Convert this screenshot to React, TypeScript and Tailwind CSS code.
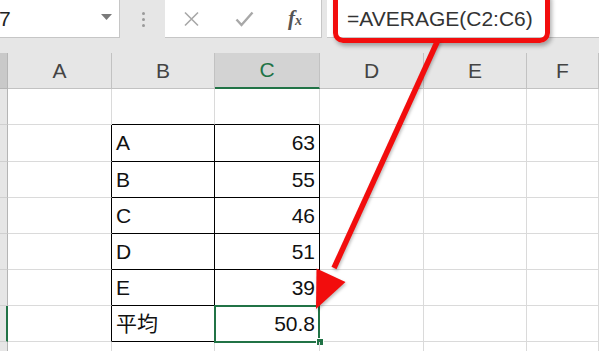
import React from 'react'

const font = { fontFamily: '"Liberation Sans", "Noto Sans CJK JP", sans-serif' }

const colWidths = ['w-[104px]', 'w-[103px]', 'w-[105px]', 'w-[104px]', 'w-[103px]', 'flex-1']
const letters = ['A', 'B', 'C', 'D', 'E', 'F']

const rows = [
  { h: 'h-[36px]', b: '', c: '' },
  { h: 'h-[37px]', b: 'A', c: '63' },
  { h: 'h-[36px]', b: 'B', c: '55' },
  { h: 'h-[36px]', b: 'C', c: '46' },
  { h: 'h-[36px]', b: 'D', c: '51' },
  { h: 'h-[36px]', b: 'E', c: '39' },
  { h: 'h-[36px]', b: '平均', c: '50.8' },
  { h: 'h-[36px]', b: '', c: '' },
]

function FormulaBar() {
  return (
    <div className="bg-[#e6e6e6]">
      <div className="flex h-[38px]">
        {/* name box */}
        <div className="relative flex w-[120px] items-center overflow-hidden border-r border-b border-[#c6c6c6] bg-white">
          <span className="ml-[-1px] text-[21px] leading-none text-[#222]">7</span>
          <svg className="absolute left-[101px] top-[14px]" width="11" height="6" viewBox="0 0 11 6">
            <path d="M0 0 L11 0 L5.5 6 Z" fill="#7a7a7a" />
          </svg>
        </div>
        <div className="flex w-[45px] flex-col items-center justify-center gap-[3px] pl-[1px]">
          <span className="h-[3px] w-[3px] rounded-full bg-[#9a9a9a]" />
          <span className="h-[3px] w-[3px] rounded-full bg-[#9a9a9a]" />
          <span className="h-[3px] w-[3px] rounded-full bg-[#9a9a9a]" />
        </div>
        {/* cancel / enter / fx */}
        <div className="flex w-[157px] items-center border-r border-b border-[#c6c6c6] bg-white">
          <svg className="ml-[18px]" width="17" height="16" viewBox="0 0 17 16">
            <path d="M2 1.5 L15 14.5 M15 1.5 L2 14.5" stroke="#a8a8a8" strokeWidth="1.6" />
          </svg>
          <svg className="ml-[35px]" width="19" height="16" viewBox="0 0 19 16">
            <path d="M1.5 8.5 L6.5 14 L17.5 1.5" stroke="#a8a8a8" strokeWidth="2.4" fill="none" />
          </svg>
          <span
            className="ml-[34px] text-[21px] font-bold italic leading-none text-[#555]"
            style={{ fontFamily: '"Liberation Serif", serif' }}
          >
            f<span className="text-[14px]">x</span>
          </span>
        </div>
        <div className="w-[5px]" />
        <div className="flex flex-1 items-center border-b border-[#c6c6c6] bg-white pl-[20px]">
          <span className="text-[21px] leading-none text-[#333]">=AVERAGE(C2:C6)</span>
        </div>
      </div>
      <div className="h-[15px]" />
    </div>
  )
}

function HeaderRow() {
  return (
    <div className="flex h-[36px] bg-[#e6e6e6]">
      <div className="w-[8px] border-r border-b border-[#b5b5b5] bg-[#c9c9c9]" />
      {letters.map((l, i) => (
        <div
          key={l}
          className={`${colWidths[i]} flex items-center justify-center border-r text-[21px] ${
            l === 'C'
              ? 'border-b-2 border-r-[#c2c2c2] border-b-[#217346] bg-[#d3d3d3] text-[#217346]'
              : 'border-b border-[#c2c2c2] text-[#444]'
          }`}
        >
          {l}
        </div>
      ))}
    </div>
  )
}

export default function App() {
  return (
    <div className="relative h-[351px] w-[599px] overflow-hidden bg-white" style={font}>
      <FormulaBar />
      <HeaderRow />

      {rows.map((r, ri) => {
        const inTable = ri >= 1 && ri <= 6
        const active = ri === 6
        return (
          <div key={ri} className={`flex ${r.h}`}>
            <div
              className={`w-[8px] border-b border-[#d0d0d0] bg-[#e6e6e6] ${
                active ? 'border-r-2 border-r-[#217346]' : 'border-r border-r-[#b5b5b5]'
              }`}
            />
            {/* A */}
            <div
              className={`${colWidths[0]} border-r border-b border-b-[#dadada] ${
                inTable ? 'border-r-black' : 'border-r-[#dadada]'
              }`}
            />
            {/* B */}
            <div
              className={`${colWidths[1]} flex items-center border-r border-b pl-[4px] text-[21px] text-[#111] ${
                ri === 0 || inTable ? 'border-b-black' : 'border-b-[#dadada]'
              } ${inTable ? 'border-r-black' : 'border-r-[#dadada]'}`}
            >
              {r.b}
            </div>
            {/* C */}
            <div
              className={`${colWidths[2]} relative flex items-center justify-end border-r border-b pr-[4px] text-[21px] text-[#111] ${
                ri === 0 || inTable ? 'border-b-black' : 'border-b-[#dadada]'
              } ${inTable ? 'border-r-black' : 'border-r-[#dadada]'}`}
            >
              {r.c}
              {active && (
                <>
                  <div className="absolute left-[-1px] top-[-1px] h-[38px] w-[106px] border-2 border-[#217346]" />
                  <div className="absolute right-[-5px] bottom-[-5px] h-[8px] w-[8px] border border-white bg-[#217346]" />
                </>
              )}
            </div>
            {[3, 4, 5].map((ci) => (
              <div key={ci} className={`${colWidths[ci]} border-r border-b border-[#dadada]`} />
            ))}
          </div>
        )
      })}

      {/* red callout around the formula */}
      <div className="pointer-events-none absolute left-[333px] top-[-12px] h-[55px] w-[217px] rounded-[10px] border-[5px] border-[#f20d0d] shadow-[2px_3px_4px_rgba(0,0,0,0.3)]" />

      {/* arrow */}
      <svg
        className="pointer-events-none absolute left-0 top-0"
        width="599"
        height="351"
        viewBox="0 0 599 351"
        style={{ filter: 'drop-shadow(1px 2px 1.5px rgba(0,0,0,0.25))' }}
      >
        <line x1="438" y1="40" x2="334" y2="268" stroke="#f20d0d" strokeWidth="5.5" />
        <path d="M316 309 L316.5 268.5 L345.5 282 Z" fill="#f20d0d" />
      </svg>
    </div>
  )
}
